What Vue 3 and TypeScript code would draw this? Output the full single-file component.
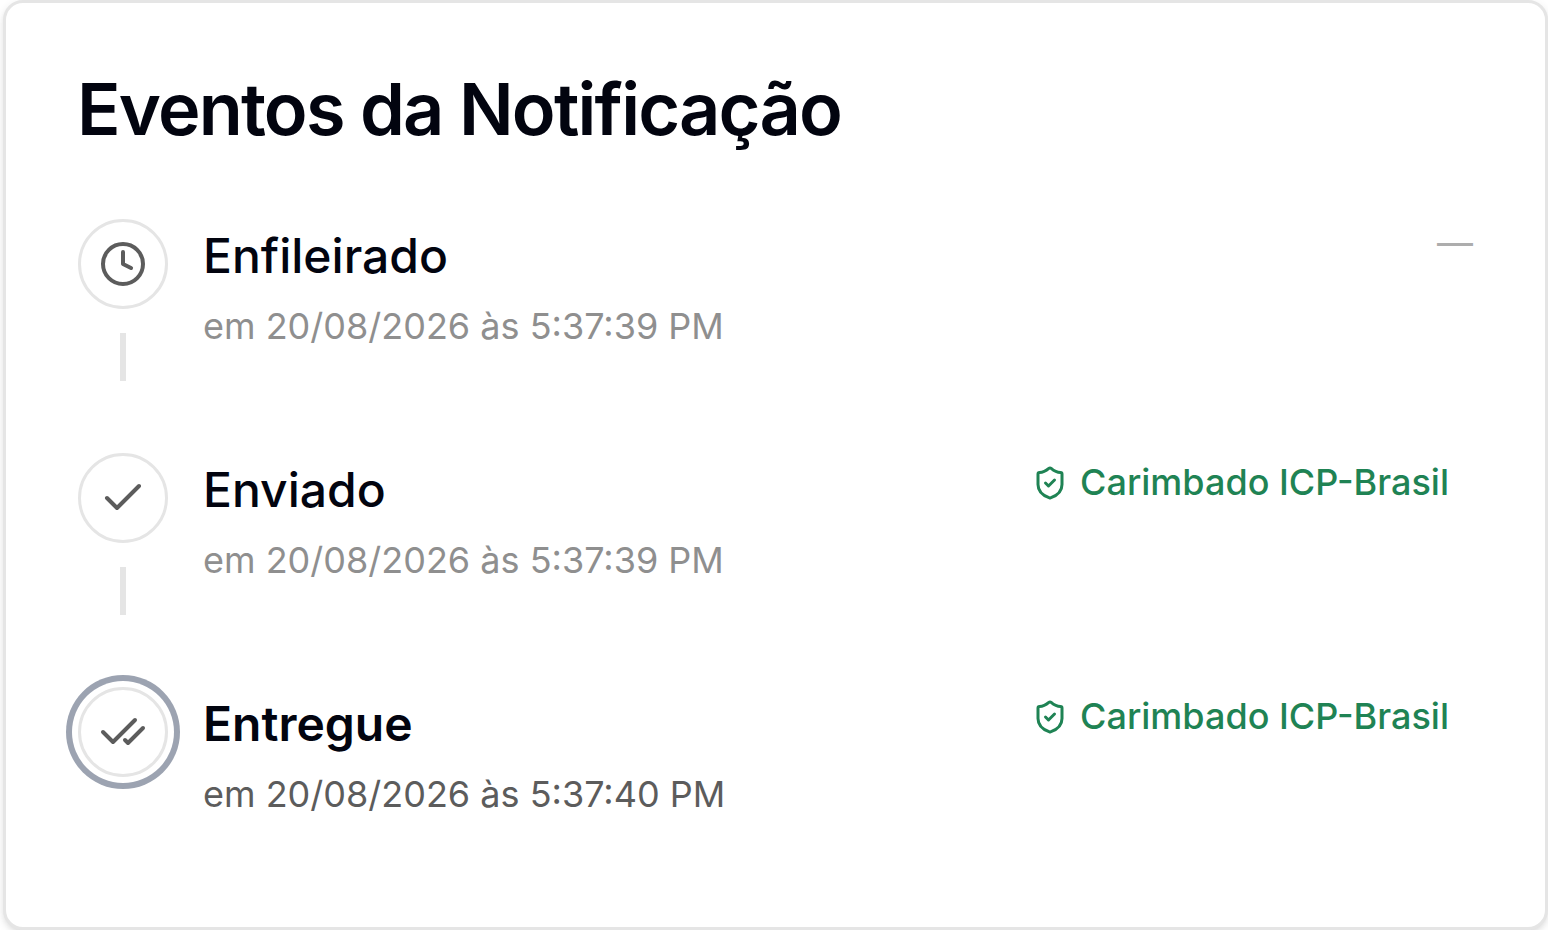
<script setup lang="ts">
type IconName = 'clock' | 'check' | 'check-check'

interface NotificationEvent {
  label: string
  time: string
  icon: IconName
  stamped: boolean
}

const events: NotificationEvent[] = [
  { label: 'Enfileirado', time: 'em 20/08/2026 às 5:37:39 PM', icon: 'clock', stamped: false },
  { label: 'Enviado', time: 'em 20/08/2026 às 5:37:39 PM', icon: 'check', stamped: true },
  { label: 'Entregue', time: 'em 20/08/2026 às 5:37:40 PM', icon: 'check-check', stamped: true },
]

const isLast = (index: number): boolean => index === events.length - 1
</script>

<template>
  <section class="card">
    <h2 class="title">Eventos da Notificação</h2>
    <ol class="timeline">
      <li v-for="(event, i) in events" :key="event.label" class="event" :class="{ current: isLast(i) }">
        <div class="rail">
          <div class="marker">
            <svg class="icon" :class="event.icon" viewBox="0 0 24 24">
              <template v-if="event.icon === 'clock'">
                <circle cx="12" cy="12" r="10" />
                <path d="M12 6v6l4 2" />
              </template>
              <path v-else-if="event.icon === 'check'" d="M20 6 9 17l-5-5" />
              <template v-else>
                <path d="M18 6 7 17l-5-5" />
                <path d="m22 10-7.5 7.5L13 16" />
              </template>
            </svg>
          </div>
          <div v-if="!isLast(i)" class="connector"></div>
        </div>
        <div class="details">
          <p class="label">{{ event.label }}</p>
          <p class="time">{{ event.time }}</p>
        </div>
        <span v-if="event.stamped" class="badge">
          <svg class="shield" viewBox="0 0 24 24">
            <path d="M20 13c0 5-3.5 7.5-7.66 8.95a1 1 0 0 1-.67-.01C7.5 20.5 4 18 4 13V6a1 1 0 0 1 1-1c2 0 4.5-1.2 6.24-2.72a1.17 1.17 0 0 1 1.52 0C14.51 3.81 17 5 19 5a1 1 0 0 1 1 1z" />
            <path d="m9 12 2 2 4-4" />
          </svg>
          <span class="badge-text">Carimbado ICP-Brasil</span>
        </span>
        <span v-else class="empty">—</span>
      </li>
    </ol>
  </section>
</template>

<style>
body {
  background: #fff;
}
</style>

<style scoped>
.card {
  box-sizing: border-box;
  width: 1545px;
  height: 930px;
  margin-left: 3px;
  padding: 70px 72px 0;
  border: 3px solid #e5e5e5;
  border-radius: 20px;
  background: #fff;
  box-shadow: 0 3px 9px rgba(0, 0, 0, 0.1), 0 3px 6px -3px rgba(0, 0, 0, 0.1);
  color: #02040f;
  font-family: Inter, "Liberation Sans", sans-serif;
}

.title {
  margin: 0 0 74px -1px;
  font-size: 72px;
  font-weight: 600;
  line-height: 72px;
  letter-spacing: -0.025em;
}

.timeline {
  display: flex;
  flex-direction: column;
  gap: 72px;
  margin: 0;
  padding: 0;
  list-style: none;
}

.event {
  display: flex;
  align-items: flex-start;
  gap: 35px;
  height: 162px;
}

.rail {
  display: flex;
  flex-direction: column;
  align-items: center;
  gap: 24px;
}

.marker {
  box-sizing: border-box;
  display: flex;
  align-items: center;
  justify-content: center;
  width: 90px;
  height: 90px;
  border: 3px solid #e5e5e5;
  border-radius: 50%;
  background: #fff;
}

.current .marker {
  box-shadow: 0 0 0 6px #fff, 0 0 0 12px #9ca3b1;
}

.icon {
  width: 48px;
  height: 48px;
  fill: none;
  stroke: #5c5c5c;
  stroke-width: 2;
  stroke-linecap: round;
  stroke-linejoin: round;
}

.connector {
  width: 6px;
  height: 48px;
  background: #e5e5e5;
}

.details {
  flex: 1;
  padding-top: 1px;
}

.label {
  margin: 0 0 7px;
  font-size: 48px;
  font-weight: 500;
  line-height: 72px;
}

.current .label {
  font-weight: 600;
}

.time {
  margin: 0;
  color: #8f8f8f;
  font-size: 36px;
  line-height: 54px;
}

.current .time {
  color: #5c5c5c;
}

.badge {
  display: flex;
  align-items: center;
  gap: 12px;
  padding: 6px 24px;
  color: #1f8354;
  font-size: 36px;
  font-weight: 500;
  line-height: 48px;
}

.badge-text {
  margin-bottom: 2px;
  line-height: 46px;
}

.shield {
  width: 36px;
  height: 36px;
  fill: none;
  stroke: currentColor;
  stroke-width: 2;
  stroke-linecap: round;
  stroke-linejoin: round;
}

.empty {
  color: #adadad;
  font-size: 36px;
  line-height: 48px;
}
</style>
